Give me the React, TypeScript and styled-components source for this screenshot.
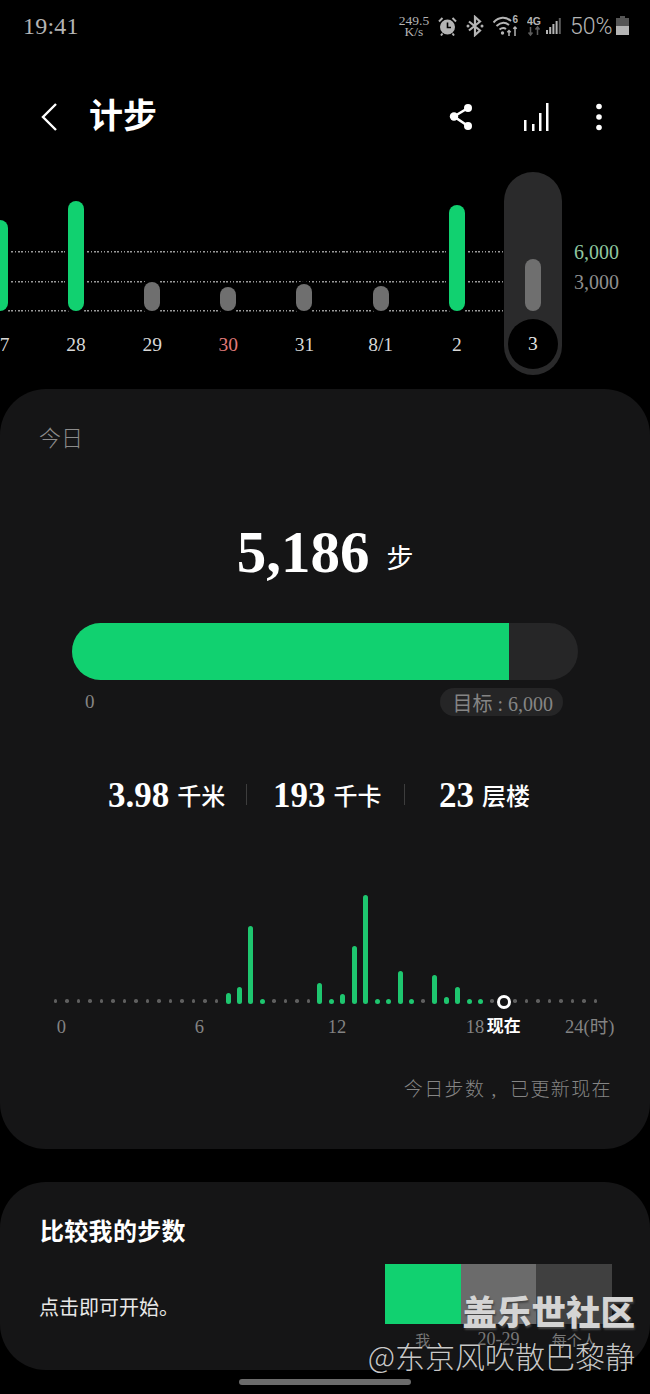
import React from 'react';
import styled, { createGlobalStyle } from 'styled-components';

const SERIF = `"Liberation Serif", "Noto Sans CJK SC", serif`;
const GREEN = '#11d170';

const GlobalStyle = createGlobalStyle`
  html, body { margin: 0; padding: 0; background: #000; }
  body { font-family: ${SERIF}; }
`;

const Page = styled.div`
  position: relative;
  width: 650px;
  height: 1394px;
  overflow: hidden;
  background: #000;
  color: #fff;
`;

/* status bar */
const StatusBar = styled.div`
  height: 50px;
  padding: 0 21px 0 23px;
  display: flex;
  align-items: center;
  justify-content: space-between;
  box-sizing: border-box;
  color: #b4b4b4;
`;
const Clock = styled.span`
  font-size: 24px;
  letter-spacing: 0.2px;
  margin-top: 2px;
`;
const StatusIcons = styled.div`
  display: flex;
  align-items: center;
  margin-top: 2px;
`;
const Speed = styled.span`
  width: 30px;
  margin-right: 9px;
  font-size: 13.5px;
  line-height: 11.5px;
  text-align: center;
  white-space: nowrap;
  display: flex;
  flex-direction: column;
  align-items: center;
`;
const StatusSvg = styled.svg<{ $gap: number }>`
  display: block;
  margin-right: ${p => p.$gap}px;
  flex: none;
`;
const Battery = styled.span`
  font-family: Roboto, sans-serif;
  font-weight: 300;
  font-size: 23px;
  margin-right: 5px;
  width: 41px;
  white-space: nowrap;
`;

/* header */
const Header = styled.div`
  padding: 47px 48px 35px 41px;
  display: flex;
  align-items: center;
  height: 40px;
`;
const Title = styled.h1`
  margin: 0 0 0 32px;
  font-size: 34px;
  line-height: 40px;
  font-weight: 700;
  flex: 1;
`;
const HeaderIcon = styled.svg<{ $gap?: number }>`
  display: block;
  margin-left: ${p => p.$gap ?? 0}px;
`;

/* week chart */
const WeekChart = styled.div`
  display: flex;
  height: 203px;
  margin: 0 0 14px -38.25px;
`;
const DOTS = 'repeating-linear-gradient(90deg, #9a9a9a 0 1.5px, transparent 1.5px 3.3px)';
const DayColumn = styled.div<{ $selected?: boolean }>`
  width: 76.17px;
  flex: none;
  display: flex;
  flex-direction: column;
  align-items: center;
  background-image: ${DOTS}, ${DOTS}, ${DOTS};
  background-size: ${p => (p.$selected ? '12px' : '100%')} 1.5px;
  background-repeat: no-repeat;
  background-position: 0 78.5px, 0 108.5px, 0 138px;
`;
const Plot = styled.div`
  width: 100%;
  height: 139px;
  flex: none;
  display: flex;
  align-items: flex-end;
  justify-content: center;
`;
const DayBar = styled.div<{ $color: string }>`
  width: 16px;
  border-radius: 8px;
  background: ${p => p.$color};
  box-shadow: 0 0 0 3px #000;
`;
const DayLabel = styled.div<{ $color: string }>`
  margin-top: 20px;
  height: 28px;
  font-size: 19.5px;
  line-height: 28px;
  color: ${p => p.$color};
`;
const SelectedPill = styled.div`
  width: 58px;
  height: 203px;
  border-radius: 29px;
  background: #2a2a2b;
  display: flex;
  flex-direction: column;
  align-items: center;
`;
const SelectedPlot = styled.div`
  height: 139px;
  flex: none;
  display: flex;
  align-items: flex-end;
`;
const SelectedBar = styled.div`
  width: 16px;
  height: 52px;
  border-radius: 8px;
  background: #6f6f6f;
`;
const SelectedCircle = styled.div`
  margin-top: 8px;
  width: 50px;
  height: 50px;
  border-radius: 50%;
  background: #000;
  display: flex;
  align-items: center;
  justify-content: center;
  font-size: 19.5px;
  color: #e4e4e4;
`;
const YAxis = styled.div`
  margin: 65px 0 0 3px;
  display: flex;
  flex-direction: column;
  font-size: 20px;
  line-height: 30px;
`;
const YTick = styled.span<{ $color: string }>`
  color: ${p => p.$color};
`;

/* cards */
const Card = styled.section<{ $height: number; $mb: number }>`
  height: ${p => p.$height}px;
  margin-bottom: ${p => p.$mb}px;
  border-radius: 46px;
  background: #151516;
  overflow: hidden;
`;
const Today = styled.div`
  margin: 35px 0 0 39px;
  font-size: 22px;
  line-height: 30px;
  color: #8c8c8c;
  font-weight: 300;
`;
const StepCount = styled.div`
  margin-top: 63px;
  height: 70px;
  display: flex;
  justify-content: center;
  align-items: center;
  gap: 17px;
`;
const StepNumber = styled.span`
  font-size: 59px;
  font-weight: 700;
  line-height: 70px;
`;
const StepUnit = styled.span`
  font-size: 27px;
  margin-top: 8px;
`;
const Track = styled.div`
  margin: 36px 72px 0;
  height: 57px;
  border-radius: 29px;
  background: #262627;
  overflow: hidden;
`;
const Fill = styled.div`
  height: 100%;
  background: ${GREEN};
`;
const Scale = styled.div`
  margin: 8px 87px 0 85px;
  height: 28px;
  display: flex;
  justify-content: space-between;
  align-items: center;
  font-size: 19px;
  color: #858585;
`;
const Goal = styled.span`
  height: 28px;
  padding: 0 10px 0 12px;
  border-radius: 14px;
  background: #252526;
  display: flex;
  align-items: center;
  font-size: 20px;
  white-space: pre;
`;
const Stats = styled.div`
  margin: 60px 0 0 108px;
  height: 40px;
  display: flex;
  align-items: center;
`;
const Stat = styled.div<{ $width: number }>`
  width: ${p => p.$width}px;
  display: flex;
  align-items: center;
  gap: 8px;
  flex: none;
`;
const StatValue = styled.span`
  font-size: 35px;
  font-weight: 700;
  line-height: 40px;
`;
const StatUnit = styled.span`
  font-size: 24px;
  font-weight: 500;
  line-height: 40px;
  margin-top: 2px;
  white-space: nowrap;
`;
const StatDivider = styled.span<{ $right: number }>`
  width: 1px;
  height: 21px;
  margin: -4px ${p => p.$right}px 0 0;
  background: #3d3d3d;
  flex: none;
`;

/* hourly chart */
const HourGrid = styled.div`
  margin: 74px 0 0 50px;
  height: 120px;
  padding-bottom: 6px;
  box-sizing: border-box;
  display: grid;
  grid-template-columns: repeat(48, 11.49px);
  align-items: end;
  justify-items: center;
`;
const HourBar = styled.div`
  width: 5px;
  border-radius: 3px;
  background: #1ec66f;
`;
const HourDot = styled.div`
  width: 3.5px;
  height: 3.5px;
  margin-bottom: 1.5px;
  border-radius: 50%;
  background: #5f5f5f;
`;
const NowRing = styled.div`
  width: 14px;
  height: 14px;
  margin-bottom: -5px;
  border: 3.5px solid #fff;
  border-radius: 50%;
  box-sizing: border-box;
  background: #151516;
`;
const AxisRow = styled.div`
  margin: 5px 0 0 50px;
  height: 24px;
  display: grid;
  grid-template-columns: repeat(48, 11.49px);
  font-size: 18.5px;
  line-height: 24px;
  color: #838383;
`;
const AxisLabel = styled.span<{ $start: number; $span: number; $now?: boolean }>`
  grid-row: 1;
  grid-column: ${p => p.$start} / span ${p => p.$span};
  justify-self: center;
  white-space: nowrap;
  ${p => p.$now && 'color: #fff; font-weight: 700; font-size: 17px;'}
`;
const Footnote = styled.div`
  margin: 36px 38px 0 0;
  font-size: 19px;
  line-height: 30px;
  letter-spacing: 1.4px;
  text-align: right;
  color: #858585;
  font-weight: 300;
  white-space: pre;
`;

/* compare card */
const CompareTitle = styled.h2`
  margin: 34px 0 0 40px;
  font-size: 24px;
  letter-spacing: 0.3px;
  line-height: 32px;
  font-weight: 700;
`;
const CompareRow = styled.div`
  margin: 16px 38px 0 39px;
  display: flex;
  justify-content: space-between;
`;
const CompareText = styled.div`
  margin-top: 28px;
  font-size: 20px;
  line-height: 32px;
  color: #e8e8e8;
`;
const CompareBars = styled.div`
  display: grid;
  grid-template-columns: repeat(3, 75.67px);
  grid-template-rows: 60px 26px;
  justify-items: center;
  align-items: center;
`;
const CompareSwatch = styled.div<{ $color: string }>`
  width: 100%;
  height: 100%;
  background: ${p => p.$color};
`;
const CompareLabel = styled.span<{ $size: number }>`
  font-size: ${p => p.$size}px;
  color: #777;
  margin-top: 5px;
`;

const HomeBar = styled.div`
  width: 172px;
  height: 6px;
  margin: 0 auto;
  border-radius: 3px;
  background: #6b6b6b;
`;

/* watermark lies over the card */
const Watermark = styled.div`
  position: absolute;
  right: 15px;
  top: 1288px;
  display: flex;
  flex-direction: column;
  align-items: flex-end;
  font-family: "Noto Sans CJK SC", sans-serif;
  white-space: nowrap;
`;
const WatermarkBrand = styled.div`
  font-size: 34.5px;
  line-height: 44px;
  font-weight: 900;
  color: #d4d4d4;
  text-shadow: 1px 2px 2px #444;
`;
const WatermarkUser = styled.div`
  font-size: 30px;
  line-height: 46px;
  font-weight: 300;
  color: #c8c8c8;
  text-shadow: 0 0 1px #000;
`;

const days = [
  { label: '27', height: 91, color: GREEN, text: '#d8d8d8' },
  { label: '28', height: 110, color: GREEN, text: '#d8d8d8' },
  { label: '29', height: 29, color: '#6f6f6f', text: '#d8d8d8' },
  { label: '30', height: 24, color: '#6f6f6f', text: '#e07a7a' },
  { label: '31', height: 27, color: '#6f6f6f', text: '#d8d8d8' },
  { label: '8/1', height: 25, color: '#6f6f6f', text: '#d8d8d8' },
  { label: '2', height: 106, color: GREEN, text: '#d8d8d8' },
];

// half hour index -> bar height, 5 means a green dot
const hours: Record<number, number> = {
  15: 11, 16: 17, 17: 78, 18: 5, 23: 21, 24: 5, 25: 10, 26: 58, 27: 109,
  28: 5, 29: 5, 30: 33, 31: 5, 33: 29, 34: 7, 35: 17, 36: 5, 37: 5,
};

const App: React.FC = () => {
  return (
    <Page>
      <GlobalStyle />
      <StatusBar>
        <Clock>19:41</Clock>
        <StatusIcons>
          <Speed><span>249.5</span><span>K/s</span></Speed>
          <StatusSvg $gap={9} width="19" height="20" viewBox="0 0 19 20" fill="none">
            <circle cx="9.5" cy="11" r="7.5" fill="#b4b4b4" />
            <path d="M9.5 6.5V11.5H13" stroke="#000" strokeWidth="1.6" />
            <path d="M1 5.5 4.5 2M18 5.5 14.5 2M4.5 17.5 3 19.5M14.5 17.5 16 19.5" stroke="#b4b4b4" strokeWidth="2" />
          </StatusSvg>
          <StatusSvg $gap={9} width="18" height="22" viewBox="0 0 18 22" fill="none">
            <path d="M3 6.5 14 15.5 9 20V2L14 6.5 3 15.5" stroke="#b4b4b4" strokeWidth="2.2" />
            <circle cx="2" cy="11" r="1.5" fill="#b4b4b4" />
            <circle cx="16" cy="11" r="1.5" fill="#b4b4b4" />
          </StatusSvg>
          <StatusSvg $gap={9} width="25" height="22" viewBox="0 0 25 22" fill="none">
            <path d="M0.500 7.500C6 1.500 13 1.500 18 6M3.500 11C8 6.800 12 6.800 16 10M6.500 14.500C9 12.500 11 12.500 13 14" stroke="#b4b4b4" strokeWidth="2" />
            <circle cx="9.500" cy="18" r="1.700" fill="#b4b4b4" />
            <path d="M16 15.500V21M14.300 17.200 16 15.500 17.700 17.200M22 12V21M20.300 13.700 22 12 23.700 13.700" stroke="#b4b4b4" strokeWidth="1.500" />
            <text x="19.500" y="8" fontSize="10" fontWeight="700" fill="#b4b4b4" fontFamily="Liberation Sans">6</text>
          </StatusSvg>
          <StatusSvg $gap={5} width="14" height="22" viewBox="0 0 14 22" fill="none">
            <text x="0" y="9.500" fontSize="10.500" fontWeight="700" fill="#b4b4b4" fontFamily="Liberation Sans">4G</text>
            <path d="M3.500 12V20M1.500 17.500 3.500 20 5.500 17.500" stroke="#5c5c5c" strokeWidth="1.500" />
            <path d="M10.500 20V12M8.500 14.500 10.500 12 12.500 14.500" stroke="#5c5c5c" strokeWidth="1.500" />
          </StatusSvg>
          <StatusSvg $gap={9} width="15" height="18" viewBox="0 0 15 18">
            <rect x="0" y="13" width="2" height="4" fill="#b4b4b4" />
            <rect x="3.200" y="10" width="2" height="7" fill="#b4b4b4" />
            <rect x="6.400" y="7" width="2" height="10" fill="#b4b4b4" />
            <rect x="9.600" y="4" width="2" height="13" fill="#b4b4b4" />
            <rect x="12.800" y="1" width="2" height="16" fill="#5c5c5c" />
          </StatusSvg>
          <Battery>50%</Battery>
          <StatusSvg $gap={0} width="13" height="20" viewBox="0 0 13 20">
            <rect x="4" y="0" width="5" height="2" fill="#555" />
            <rect x="0" y="2" width="13" height="8" fill="#555" />
            <rect x="0" y="10" width="13" height="9" fill="#b4b4b4" />
          </StatusSvg>
        </StatusIcons>
      </StatusBar>

      <Header>
        <svg width="16" height="28" viewBox="0 0 16 28" fill="none">
          <path d="M15 1 2 14 15 27" stroke="#fff" strokeWidth="2.4" />
        </svg>
        <Title>计步</Title>
        <HeaderIcon width="24" height="28" viewBox="0 0 24 28" fill="#fff">
          <path d="M19 5 5 13.500 19 23" stroke="#fff" strokeWidth="2.600" fill="none" />
          <circle cx="19" cy="5" r="4" />
          <circle cx="5" cy="13.500" r="4.200" />
          <circle cx="19" cy="23" r="4" />
        </HeaderIcon>
        <HeaderIcon $gap={50} width="26" height="28" viewBox="0 0 26 28" fill="#fff">
          <rect x="1" y="17" width="2.500" height="11" />
          <rect x="9" y="21" width="2.500" height="7" />
          <rect x="16" y="10" width="2.500" height="18" />
          <rect x="23" y="0" width="2.500" height="28" />
        </HeaderIcon>
        <HeaderIcon $gap={47} width="6" height="28" viewBox="0 0 6 28" fill="#fff">
          <circle cx="3" cy="3.500" r="2.800" />
          <circle cx="3" cy="14" r="2.800" />
          <circle cx="3" cy="24.500" r="2.800" />
        </HeaderIcon>
      </Header>

      <WeekChart>
        {days.map(d => (
          <DayColumn key={d.label}>
            <Plot>
              <DayBar $color={d.color} style={{ height: d.height }} />
            </Plot>
            <DayLabel $color={d.text}>{d.label}</DayLabel>
          </DayColumn>
        ))}
        <DayColumn $selected>
          <SelectedPill>
            <SelectedPlot><SelectedBar /></SelectedPlot>
            <SelectedCircle>3</SelectedCircle>
          </SelectedPill>
        </DayColumn>
        <YAxis>
          <YTick $color="#8fc7a0">6,000</YTick>
          <YTick $color="#8f8f8f">3,000</YTick>
        </YAxis>
      </WeekChart>

      <Card $height={760} $mb={33}>
        <Today>今日</Today>
        <StepCount>
          <StepNumber>5,186</StepNumber>
          <StepUnit>步</StepUnit>
        </StepCount>
        <Track><Fill style={{ width: `${(5186 / 6000) * 100}%` }} /></Track>
        <Scale>
          <span>0</span>
          <Goal>目标 : 6,000</Goal>
        </Scale>
        <Stats>
          <Stat $width={138}><StatValue>3.98</StatValue><StatUnit>千米</StatUnit></Stat>
          <StatDivider $right={26} />
          <Stat $width={131}><StatValue>193</StatValue><StatUnit>千卡</StatUnit></Stat>
          <StatDivider $right={34} />
          <Stat $width={110}><StatValue>23</StatValue><StatUnit>层楼</StatUnit></Stat>
        </Stats>
        <HourGrid>
          {Array.from({ length: 48 }, (_, i) => {
            if (i === 39) return <NowRing key={i} />;
            if (hours[i]) return <HourBar key={i} style={{ height: hours[i] }} />;
            return <HourDot key={i} />;
          })}
        </HourGrid>
        <AxisRow>
          <AxisLabel $start={1} $span={2}>0</AxisLabel>
          <AxisLabel $start={13} $span={2}>6</AxisLabel>
          <AxisLabel $start={25} $span={2}>12</AxisLabel>
          <AxisLabel $start={37} $span={2}>18</AxisLabel>
          <AxisLabel $start={40} $span={1} $now>现在</AxisLabel>
          <AxisLabel $start={47} $span={2}>24(时)</AxisLabel>
        </AxisRow>
        <Footnote>今日步数 ,  已更新现在</Footnote>
      </Card>

      <Card $height={188} $mb={9}>
        <CompareTitle>比较我的步数</CompareTitle>
        <CompareRow>
          <CompareText>点击即可开始。</CompareText>
          <CompareBars>
            <CompareSwatch $color={GREEN} />
            <CompareSwatch $color="#6b6b6b" />
            <CompareSwatch $color="#404040" />
            <CompareLabel $size={15}>我</CompareLabel>
            <CompareLabel $size={18}>20-29</CompareLabel>
            <CompareLabel $size={15}>每个人</CompareLabel>
          </CompareBars>
        </CompareRow>
      </Card>

      <HomeBar />

      <Watermark>
        <WatermarkBrand>盖乐世社区</WatermarkBrand>
        <WatermarkUser>@东京风吹散巴黎静</WatermarkUser>
      </Watermark>
    </Page>
  );
};

export default App;
